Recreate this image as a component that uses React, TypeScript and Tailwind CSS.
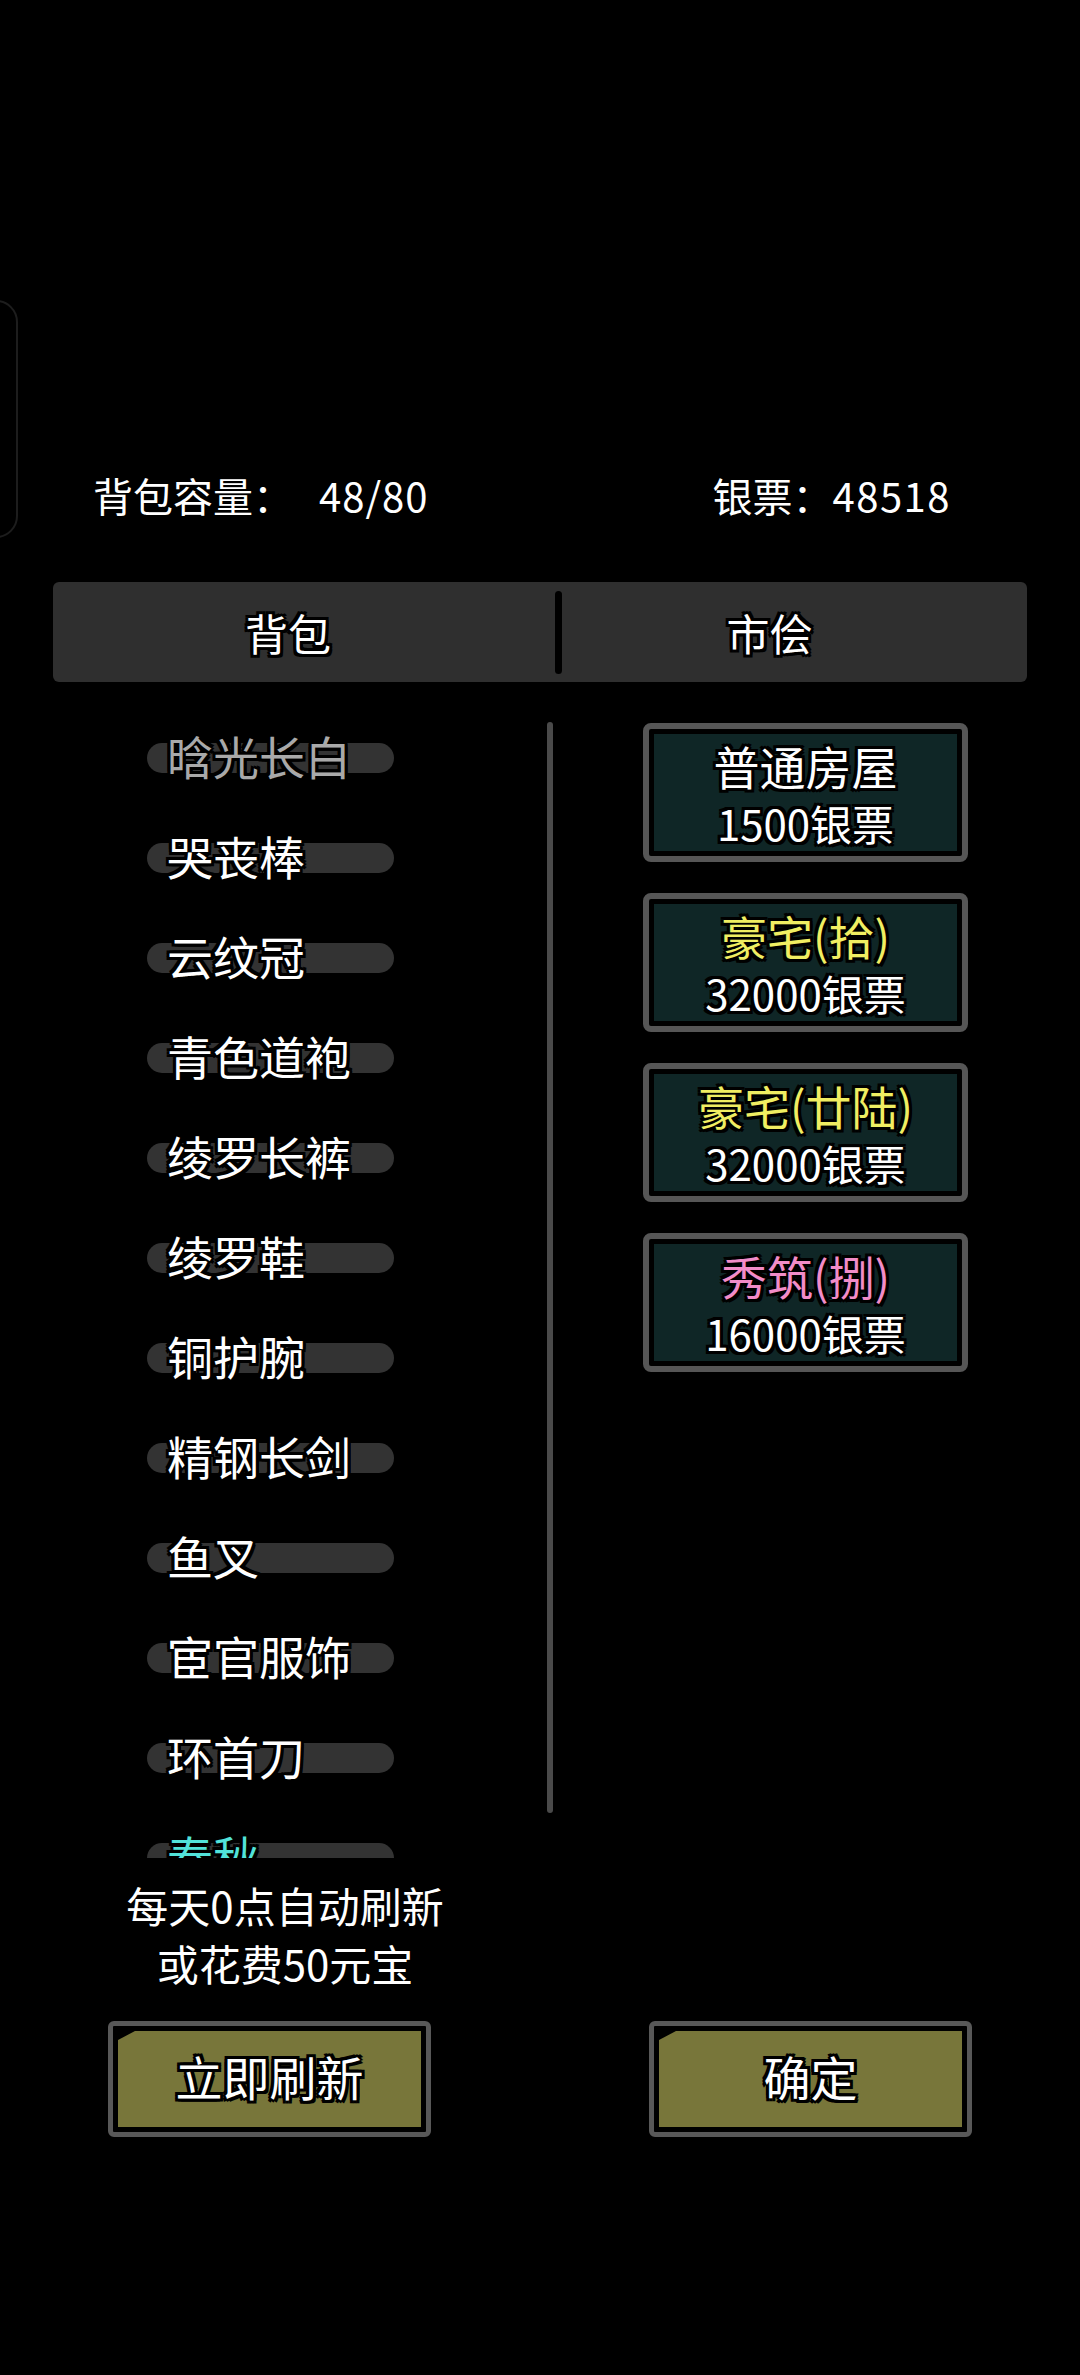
const outline =
  '[text-shadow:-3px_-3px_0_#000,3px_-3px_0_#000,-3px_3px_0_#000,3px_3px_0_#000,0_3px_0_#000,0_-3px_0_#000,3px_0_0_#000,-3px_0_0_#000]'

type Item = { name: string; color: string }

const bagItems: Item[] = [
  { name: '晗光长白', color: 'text-[#a9a9a9]' },
  { name: '哭丧棒', color: 'text-white' },
  { name: '云纹冠', color: 'text-white' },
  { name: '青色道袍', color: 'text-white' },
  { name: '绫罗长裤', color: 'text-white' },
  { name: '绫罗鞋', color: 'text-white' },
  { name: '铜护腕', color: 'text-white' },
  { name: '精钢长剑', color: 'text-white' },
  { name: '鱼叉', color: 'text-white' },
  { name: '宦官服饰', color: 'text-white' },
  { name: '环首刀', color: 'text-white' },
  { name: '春秋', color: 'text-[#52e3da]' },
]

const shopItems = [
  { title: '普通房屋', price: '1500银票', color: 'text-white' },
  { title: '豪宅(拾)', price: '32000银票', color: 'text-[#f0ee62]' },
  { title: '豪宅(廿陆)', price: '32000银票', color: 'text-[#f0ee62]' },
  { title: '秀筑(捌)', price: '16000银票', color: 'text-[#f28cc8]' },
]

function BagRow({ item }: { item: Item }) {
  return (
    <div className="flex h-[100px] items-center">
      <div className="flex h-[30px] w-[247px] items-center rounded-full bg-[#333333] pl-[20px]">
        <span className={`mb-[6px] whitespace-nowrap text-[46px] leading-none ${item.color} ${outline}`}>
          {item.name}
        </span>
      </div>
    </div>
  )
}

function ShopCard({ title, price, color }: { title: string; price: string; color: string }) {
  return (
    <div className="h-[139px] w-[325px] rounded-[8px] border-[6px] border-[#565656] bg-black p-[5px]">
      <div className="flex h-full flex-col items-center bg-[#0f2626] pt-[3px]">
        <span className={`whitespace-nowrap text-[46px] leading-[56px] ${color} ${outline}`}>{title}</span>
        <span className={`whitespace-nowrap text-[42px] leading-[60px] text-white ${outline}`}>{price}</span>
      </div>
    </div>
  )
}

function OliveButton({ label }: { label: string }) {
  return (
    <div className="h-[116px] w-[323px] rounded-[6px] border-[5px] border-[#585858] bg-black p-[5px]">
      <div className="flex h-full items-center justify-center bg-[#78763a] [clip-path:polygon(17px_0,100%_0,100%_100%,0_100%,0_9px)]">
        <span className={`mb-[8px] text-[47px] leading-none text-white ${outline}`}>{label}</span>
      </div>
    </div>
  )
}

export default function App() {
  return (
    <div className="relative h-[2375px] w-[1080px] overflow-hidden bg-black font-['Noto_Sans_CJK_SC','Noto_Sans',sans-serif] text-white">
      {/* side handle peeking in from the left edge */}
      <div className="absolute left-[-40px] top-[300px] h-[238px] w-[58px] rounded-[22px] border-2 border-[#1d1d1d]" />

      {/* capacity / silver header */}
      <div className="mt-[467px] flex h-[56px] items-center pl-[93px] pr-[129px] text-[40px] leading-none">
        <span>背包容量：</span>
        <span className="ml-[26px] tracking-[1px]">48/80</span>
        <span className="ml-auto">
          银票：<span className="tracking-[1.5px]">48518</span>
        </span>
      </div>

      {/* tabs */}
      <div className="mx-[53px] mt-[59px] flex h-[100px] items-center rounded-[6px] bg-[#2f2f2f]">
        <div className="flex h-full w-[502px] items-center justify-center pr-[32px]">
          <span className={`text-[43px] leading-none ${outline}`}>背包</span>
        </div>
        <div className="h-[83px] w-[7px] rounded-full bg-black" />
        <div className="flex h-full flex-1 items-center justify-center pr-[50px]">
          <span className={`text-[43px] leading-none ${outline}`}>市侩</span>
        </div>
      </div>

      {/* list + shop */}
      <div className="mt-[26px] flex h-[1150px] items-start">
        <div className="ml-[147px] h-full w-[247px] overflow-hidden">
          {bagItems.map((item) => (
            <BagRow key={item.name} item={item} />
          ))}
        </div>
        <div className="ml-[153px] mt-[14px] h-[1091px] w-[6px] rounded-full bg-[#4a4a4a]" />
        <div className="ml-[90px] mt-[15px] flex flex-col gap-[31px]">
          {shopItems.map((s) => (
            <ShopCard key={s.title} title={s.title} price={s.price} color={s.color} />
          ))}
        </div>
      </div>

      {/* refresh hint */}
      <div className="mt-[18px] w-[570px] text-center text-[42px] leading-[58px]">
        <p>每天0点自动刷新</p>
        <p>或花费50元宝</p>
      </div>

      {/* actions */}
      <div className="mt-[29px] flex justify-between px-[108px]">
        <OliveButton label="立即刷新" />
        <OliveButton label="确定" />
      </div>
    </div>
  )
}
